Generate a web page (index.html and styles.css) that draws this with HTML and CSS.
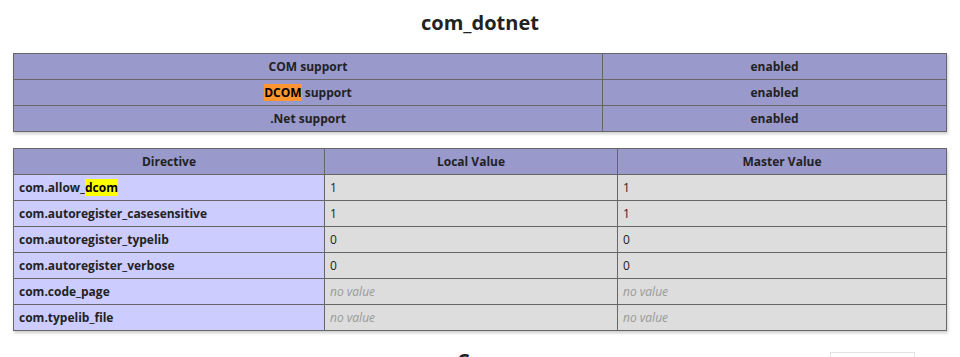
FILE: index.html
```html
<!DOCTYPE html>
<html lang="en">
<head>
<meta charset="utf-8">
<title>com_dotnet</title>
<link rel="stylesheet" href="styles.css">
</head>
<body>
<section class="module">
  <h2 class="module-title">com_dotnet</h2>
  <table class="info info-support">
    <colgroup><col class="c-name"><col class="c-val"></colgroup>
    <tr><td class="h">COM support</td><td class="h">enabled</td></tr>
    <tr><td class="h"><mark class="hit-active">DCOM</mark> support</td><td class="h">enabled</td></tr>
    <tr><td class="h">.Net support</td><td class="h">enabled</td></tr>
  </table>
  <table class="info info-directives">
    <colgroup><col class="c-dir"><col class="c-local"><col class="c-master"></colgroup>
    <tr><th>Directive</th><th>Local Value</th><th>Master Value</th></tr>
    <tr><td class="e">com.allow_<mark class="hit">dcom</mark></td><td class="v">1</td><td class="v">1</td></tr>
    <tr><td class="e">com.autoregister_casesensitive</td><td class="v">1</td><td class="v">1</td></tr>
    <tr><td class="e">com.autoregister_typelib</td><td class="v">0</td><td class="v">0</td></tr>
    <tr><td class="e">com.autoregister_verbose</td><td class="v">0</td><td class="v">0</td></tr>
    <tr><td class="e">com.code_page</td><td class="v"><i class="none">no value</i></td><td class="v"><i class="none">no value</i></td></tr>
    <tr><td class="e">com.typelib_file</td><td class="v"><i class="none">no value</i></td><td class="v"><i class="none">no value</i></td></tr>
  </table>
</section>
<section class="module next">
  <div class="title-row">
    <span></span>
    <h2 class="module-title">Core</h2>
    <div class="side-box"></div>
  </div>
</section>
</body>
</html>
```
FILE: styles.css
```css
html, body {
  margin: 0;
  padding: 0;
  background: #fff;
}
body {
  padding-top: 9px;
  font-family: "Open Sans", "Noto Sans", sans-serif;
  color: #222;
  overflow: hidden;
}
.module-title {
  margin: 0 0 16px;
  font-size: 20px;
  line-height: 28px;
  font-weight: 700;
  text-align: center;
  color: #222;
}
.info {
  border-collapse: collapse;
  width: 933px;
  margin: 0 14px 16px 13px;
  box-shadow: 1px 2px 3px #ccc;
  font-size: 12px;
  table-layout: fixed;
}
.info td, .info th {
  border: 1px solid #666;
  padding: 0 5px;
  height: 25px;
  line-height: 25px;
  vertical-align: middle;
  white-space: nowrap;
  overflow: hidden;
}
.c-name { width: 589px; }
.c-val { width: 344px; }
.c-dir { width: 311px; }
.c-local { width: 293px; }
.c-master { width: 329px; }
.info td.h, .info th {
  background: #9999cc;
  font-weight: 700;
  text-align: center;
}
.info td.e {
  background: #ccccff;
  font-weight: 700;
}
.info td.v {
  background: #dddddd;
}
.none {
  color: #999;
}
mark {
  color: #000;
  padding: 0;
}
.hit-active { background: #ff9632; }
.hit { background: #ffff00; }
.title-row {
  display: grid;
  grid-template-columns: 1fr auto 1fr;
}
.side-box {
  justify-self: end;
  margin: 5px 45px 0 0;
  width: 83px;
  height: 30px;
  border: 1px solid #e3e3e3;
}
```
